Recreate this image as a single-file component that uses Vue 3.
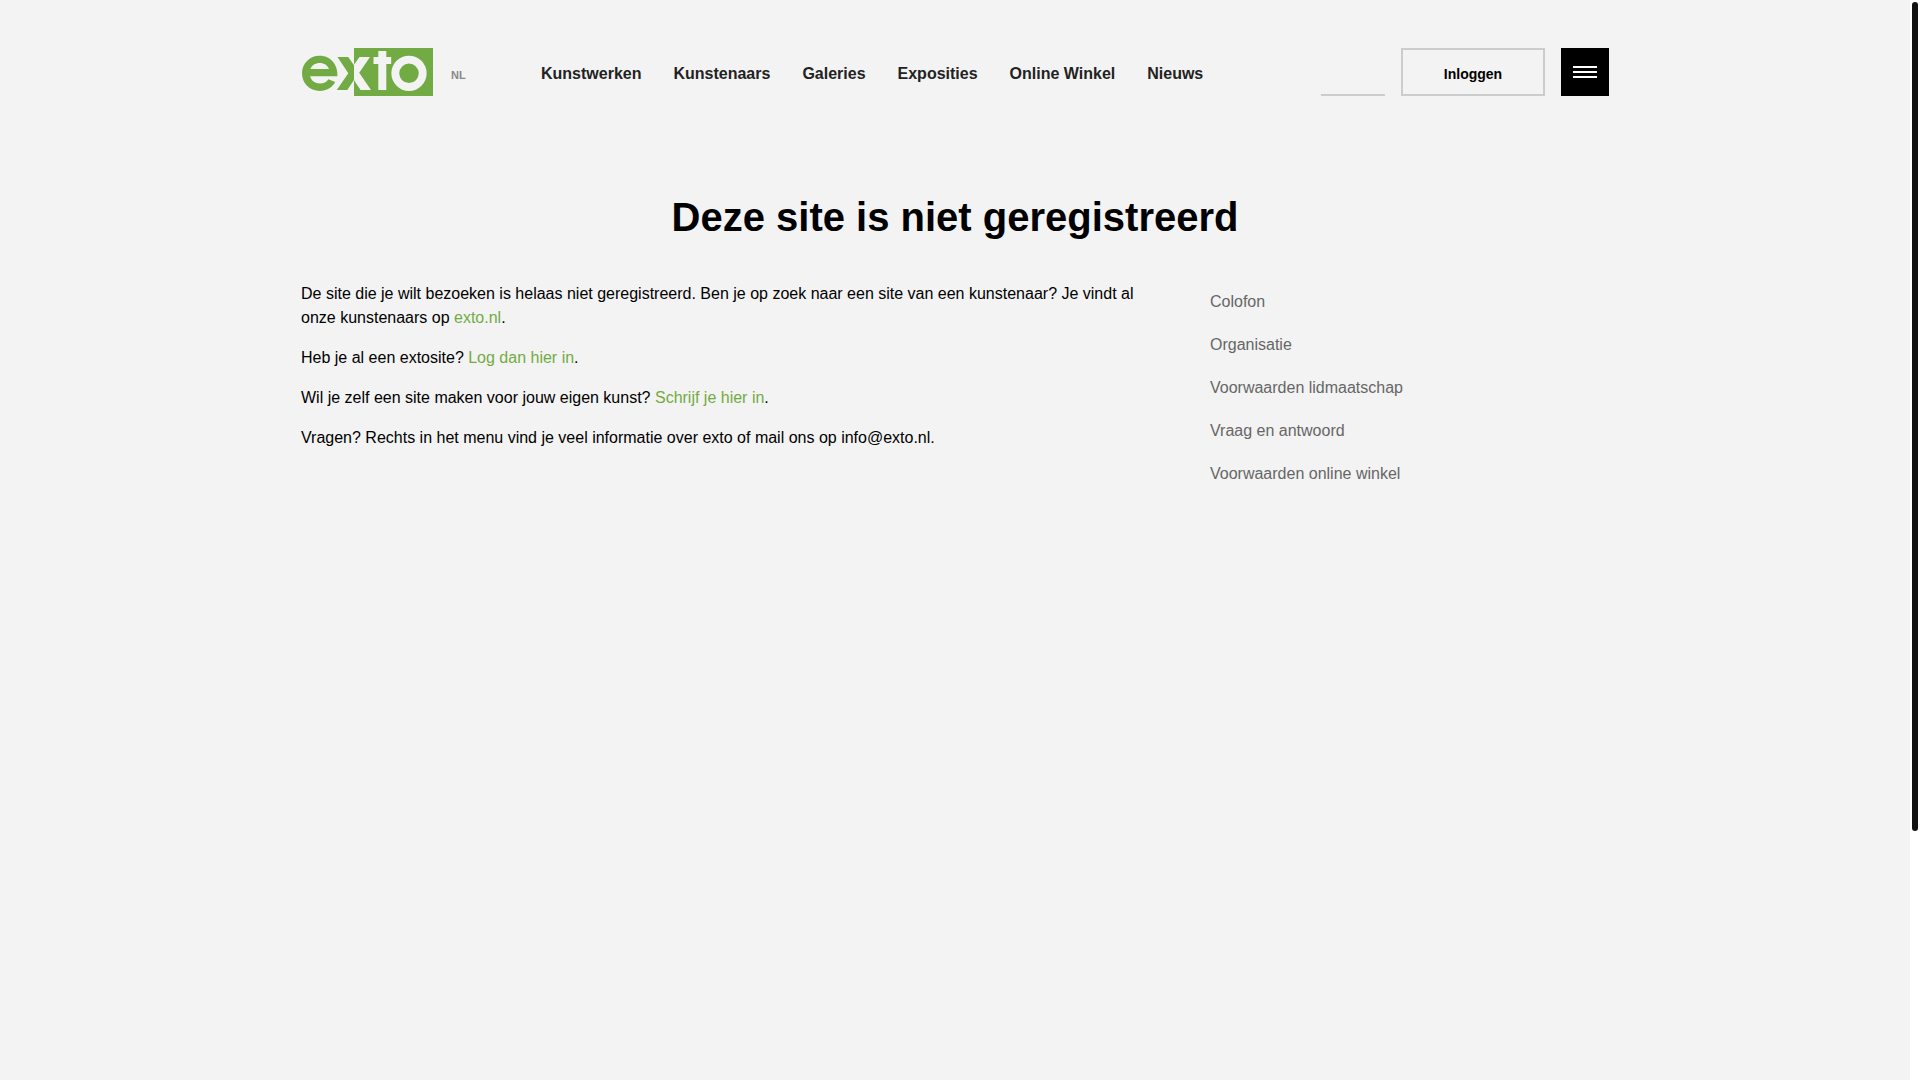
<script setup>
const nav = ['Kunstwerken', 'Kunstenaars', 'Galeries', 'Exposities', 'Online Winkel', 'Nieuws']
const links = [
  'Colofon',
  'Organisatie',
  'Voorwaarden lidmaatschap',
  'Vraag en antwoord',
  'Voorwaarden online winkel',
]
</script>

<template>
  <div class="page">
    <div class="container">
      <header class="header">
        <a class="logo" href="#" aria-label="exto">
          <svg width="132" height="48" viewBox="0 0 132 48" aria-hidden="true">
            <path fill="#72ab43" d="M53 0h79v48H53z" />
            <path
              fill="#72ab43"
              fill-rule="evenodd"
              d="M18.700 7.700C8.500 7.700 1 15.500 1 25.300c0 9.900 7.500 17.700 17.800 17.700 7 0 12.500-3.300 15.400-8.900l-6.800-2.800c-1.900 2.900-4.700 4.200-8.400 4.200-5.200 0-8.700-2.800-9.900-7.200h27.300C37.200 16.200 29.200 7.700 18.700 7.700zM9.300 21c1.600-3.700 4.900-6 9.400-6s7.900 2.300 9.300 6z"
            />
            <path fill="#72ab43" d="M36.500 9h10.700L53 17.200V32l-6.700 10H35.800l11.500-16.800z" />
            <path fill="#f3f3f3" d="M53 16.500L58.600 9H69L58.200 24.800 70 42H59.600L53 32.300z" />
            <path fill="#f3f3f3" d="M77.300 3h8v6h4.900v7h-4.900v26h-8V16h-4.800V9h4.800z" />
            <path
              fill="#f3f3f3"
              fill-rule="evenodd"
              d="M108 7.700a17.600 17.600 0 1 0 0 35.300 17.600 17.600 0 0 0 0-35.300zm0 7.900a9.700 9.700 0 1 1 0 19.500 9.700 9.700 0 0 1 0-19.500z"
            />
          </svg>
        </a>
        <a class="language" href="#">NL</a>
        <nav class="nav">
          <a v-for="item in nav" :key="item" href="#">{{ item }}</a>
        </nav>
        <div class="tools">
          <input class="search" type="search" aria-label="Zoeken" />
          <button class="login" type="button">Inloggen</button>
          <button class="menu" type="button" aria-label="Menu">
            <span></span><span></span><span></span>
          </button>
        </div>
      </header>

      <main>
        <h1>Deze site is niet geregistreerd</h1>
        <div class="columns">
          <section class="text">
            <p>
              De site die je wilt bezoeken is helaas niet geregistreerd. Ben je op zoek naar een
              site van een kunstenaar? Je vindt al onze kunstenaars op <a href="#">exto.nl</a>.
            </p>
            <p>Heb je al een extosite? <a href="#">Log dan hier in</a>.</p>
            <p>Wil je zelf een site maken voor jouw eigen kunst? <a href="#">Schrijf je hier in</a>.</p>
            <p>Vragen? Rechts in het menu vind je veel informatie over exto of mail ons op info@exto.nl.</p>
          </section>
          <aside class="side">
            <a v-for="link in links" :key="link" href="#">{{ link }}</a>
          </aside>
        </div>
      </main>
    </div>
    <div class="scrolltrack" aria-hidden="true"><div class="thumb"></div></div>
  </div>
</template>

<style>
body {
  background: #f3f3f3;
}
</style>

<style scoped>
.page {
  box-sizing: border-box;
  min-height: 100vh;
  padding: 48px 10px 0 0;
  background: #f3f3f3;
  color: #000;
  font: 16px/24px "Liberation Sans", Arial, sans-serif;
}
a {
  text-decoration: none;
}
.container {
  max-width: 1308px;
  margin: 0 auto;
}
.header {
  display: flex;
  align-items: center;
  height: 48px;
}
.logo,
.logo svg {
  display: block;
}
.language {
  width: 72px;
  margin: 6px 0 0 18px;
  color: #888;
  font-size: 11px;
  font-weight: bold;
}
.nav {
  display: flex;
  gap: 32px;
  margin: 4px 0 0 18px;
}
.nav a {
  color: #222;
  font-weight: bold;
  white-space: nowrap;
}
.tools {
  display: flex;
  gap: 16px;
  margin-left: auto;
}
.search {
  box-sizing: border-box;
  width: 64px;
  height: 48px;
  padding: 0;
  border: 0;
  border-bottom: 2px solid #ccc;
  border-radius: 0;
  outline: 0;
  background: transparent;
  appearance: none;
}
.login {
  width: 144px;
  height: 48px;
  padding: 4px 0 0;
  border: 2px solid #ccc;
  background: transparent;
  color: #000;
  font: bold 14px "Liberation Sans", Arial, sans-serif;
}
.menu {
  display: flex;
  flex-direction: column;
  align-items: center;
  justify-content: center;
  gap: 3px;
  width: 48px;
  height: 48px;
  padding: 0;
  border: 0;
  background: #000;
}
.menu span {
  width: 24px;
  height: 2px;
  background: #fff;
}
h1 {
  margin: 96px 0 40px;
  font-size: 40px;
  line-height: 50px;
  text-align: center;
}
.columns {
  display: flex;
  justify-content: space-between;
}
.text {
  flex: 0 1 844px;
}
.text p {
  margin: 0 0 16px;
}
.text a {
  color: #72ab43;
}
.side {
  display: flex;
  flex: 0 0 399px;
  flex-direction: column;
  gap: 19px;
  padding-top: 8px;
}
.side a {
  color: #666;
}
.scrolltrack {
  position: fixed;
  top: 0;
  right: 0;
  bottom: 0;
  width: 6px;
  padding: 2px;
  background: #fff;
}
.thumb {
  height: 77%;
  border-radius: 3px;
  background: #111;
}
</style>
